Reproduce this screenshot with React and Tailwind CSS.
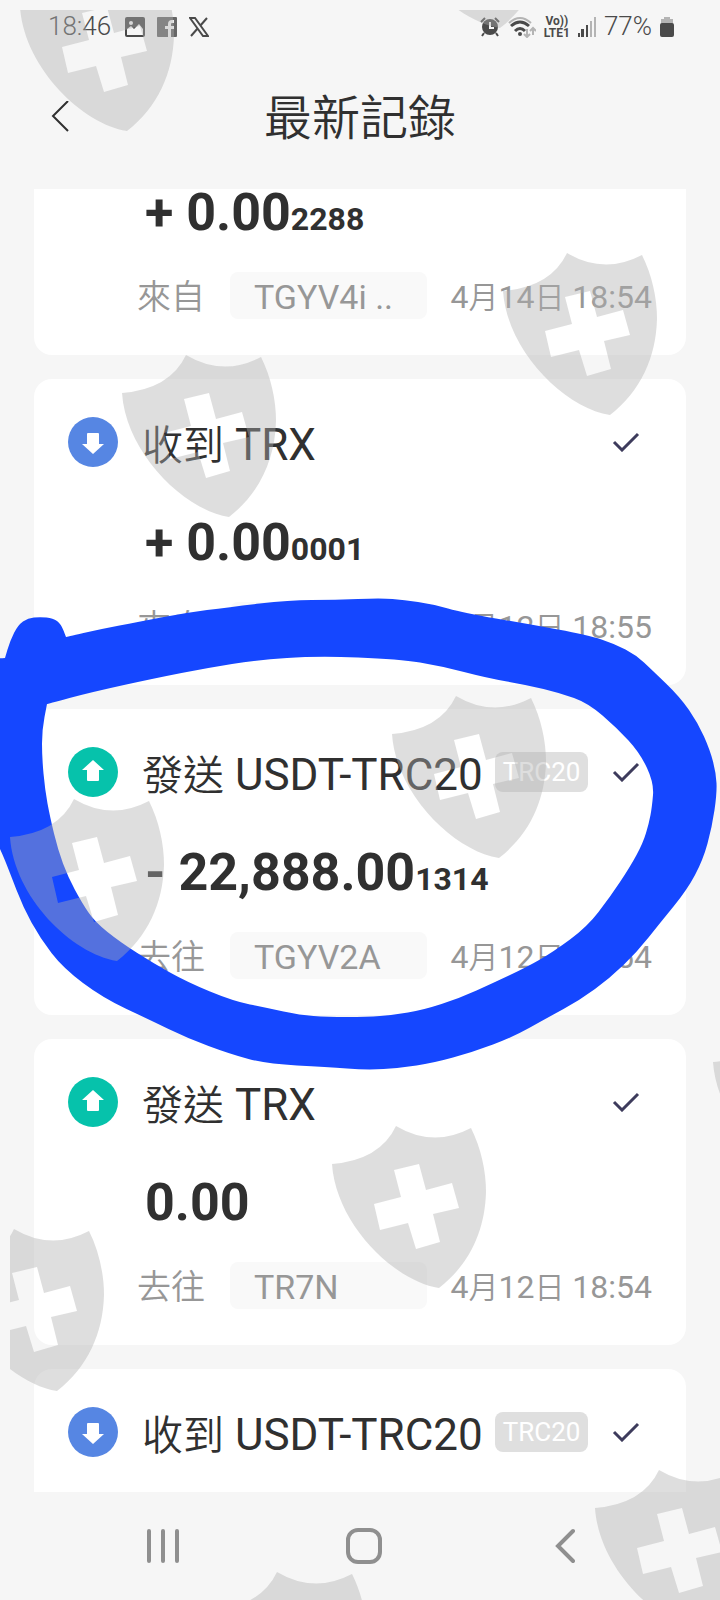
import React from 'react';
import { FaXTwitter } from 'react-icons/fa6';

const records = [
  { id: 1, clipped: true, type: 'in', coin: 'TRX', sign: '+', amount: '0.00', decimals: '2288', address: 'TGYV4i ..', month: 4, day: 14, time: '18:54' },
  { id: 2, type: 'in', coin: 'TRX', sign: '+', amount: '0.00', decimals: '0001', address: '', month: 4, day: 12, time: '18:55' },
  { id: 3, type: 'out', coin: 'USDT-TRC20', tag: 'TRC20', sign: '-', amount: '22,888.00', decimals: '1314', address: 'TGYV2A', month: 4, day: 12, time: '18:54' },
  { id: 4, type: 'out', coin: 'TRX', amount: '0.00', address: 'TR7N', month: 4, day: 12, time: '18:54' },
];

const shields = [
  [20, -31], [393, -134], [503, 253], [122, 355], [392, 696], [10, 799],
  [332, 1126], [-50, 1229], [713, 1024], [595, 1470], [213, 1572],
];

// Hand-drawn marker ring: outer edge, then the hole. A repeated point keeps a sharp corner.
const ringOuter = [
  [-10, 659], [5, 658], [5, 658], [10, 641], [18, 625], [28, 618], [40, 617], [53, 618], [61, 624], [66, 637], [66, 637],
  [101, 629], [138, 622], [184, 613], [230, 607], [289, 600], [335, 600], [381, 598], [404, 600], [432, 604], [464, 613],
  [528, 624], [588, 635], [615, 644], [636, 655], [652, 670], [680, 697], [698, 723], [710, 750], [716, 773], [717, 793],
  [712, 827], [703, 860], [687, 890], [660, 923], [637, 952], [610, 978], [580, 1000], [547, 1018], [513, 1037],
  [473, 1052], [433, 1063], [400, 1068], [367, 1070], [327, 1067], [267, 1064], [230, 1054], [187, 1038], [150, 1020],
  [103, 998], [63, 968], [40, 938], [23, 907], [10, 873], [0, 848], [-10, 830],
];
const ringInner = [
  [47, 704], [47, 704], [42, 730], [42, 757], [45, 790], [50, 817], [58, 850], [68, 877], [82, 903], [95, 922],
  [120, 942], [153, 963], [187, 982], [233, 1001], [267, 1008], [300, 1015], [327, 1017], [367, 1017], [393, 1015],
  [423, 1010], [460, 998], [493, 983], [527, 967], [553, 952], [587, 927], [610, 897], [630, 867], [643, 843],
  [649, 823], [652, 807], [654, 783], [640, 753], [617, 728], [588, 703], [560, 693], [527, 685], [487, 678],
  [441, 666], [399, 659], [317, 656], [257, 660], [207, 668], [156, 678], [92, 692],
];

function smooth(points) {
  const mid = (a, b) => `${(a[0] + b[0]) / 2} ${(a[1] + b[1]) / 2}`;
  const last = points[points.length - 1];
  let d = `M${mid(last, points[0])}`;
  points.forEach((p, i) => {
    d += `Q${p[0]} ${p[1]} ${mid(p, points[(i + 1) % points.length])}`;
  });
  return d + 'Z';
}

function StatusBar() {
  return (
    <div className="flex h-[53px] shrink-0 items-center justify-between pr-[46px] pl-12 text-[26px] text-[#4a4a4a]">
      <div className="flex items-center gap-3">
        <span className="font-light">18:46</span>
        <svg className="ml-0.5 size-5" viewBox="0 0 20 20">
          <path d="M2 0H18Q20 0 20 2V18Q20 20 18 20H2Q0 20 0 18V2Q0 0 2 0Z" fill="currentColor" />
          <path d="M2 12L6 9L9 12L14 7L18 12V18H2Z" fill="#f6f6f6" />
          <circle cx="6" cy="6" r="2" fill="#f6f6f6" />
        </svg>
        <svg className="size-5" viewBox="0 0 20 20">
          <rect width="20" height="20" rx="1" fill="#666" />
          <path d="M17 3H15Q11 3 11 7V9H8V12H11V20H14V12H17V9H14V7Q14 6 15 6H17Z" fill="#f6f6f6" />
        </svg>
        <svg className="size-5" viewBox="0 0 20 20" fill="none" stroke="currentColor" strokeWidth="2">
          <path d="M1 1H6L19 19H14ZM18 1L11 9M9 11L2 19" />
        </svg>
      </div>
      <div className="flex items-center gap-2">
        <svg className="size-5" viewBox="0 0 20 20" fill="none" stroke="currentColor">
          <circle cx="10" cy="10" r="8" fill="currentColor" stroke="none" />
          <path d="M1 5L5 1M19 5L15 1M4 16L2 19M16 16L18 19" strokeWidth="2" />
          <path d="M10 5V11H14" stroke="#f6f6f6" strokeWidth="2" />
        </svg>
        <svg className="h-[22px] w-7" viewBox="0 0 28 22" fill="none" stroke="currentColor" strokeWidth="2">
          <path d="M1 7Q12 -3 23 7" stroke="#b4b4b4" />
          <path d="M3 10Q12 2 21 10M7 15Q12 10 17 15" strokeWidth="3" />
          <circle cx="12" cy="18" r="2" fill="currentColor" stroke="none" />
          <path d="M19 13V21M16 18L19 21L22 18M25 19V12M22 15L25 12L28 15" stroke="#b4b4b4" />
        </svg>
        <span className="flex flex-col items-center text-[12px] leading-[12px] font-bold">
          <span>Vo))</span>
          <span>LTE1</span>
        </span>
        <svg className="h-5 w-[18px]" viewBox="0 0 18 20" fill="currentColor">
          <path d="M0 16H2V20H0ZM3 12H6V20H3ZM8 8H10V20H8Z" />
          <path d="M12 4H14V20H12ZM16 0H18V20H16Z" fill="#b4b4b4" />
        </svg>
        <span className="font-light">77%</span>
        <svg className="h-[22px] w-[14px]" viewBox="0 0 14 22">
          <path d="M4 1H10V3H13V8H1V3H4Z" fill="#b4b4b4" />
          <rect y="7" width="14" height="14" rx="2" fill="#4a4a4a" />
        </svg>
      </div>
    </div>
  );
}

function Header() {
  return (
    <header className="grid h-[136px] shrink-0 grid-cols-[72px_1fr_72px] items-center pb-2 text-[#303030]">
      <button type="button" aria-label="返回" className="justify-self-end pr-px">
        <svg className="h-8 w-5" viewBox="0 0 20 32" fill="none" stroke="currentColor" strokeWidth="2">
          <path d="M17 0L2 15L17 30" />
        </svg>
      </button>
      <h1 className="pt-1 text-center text-[48px] leading-[60px] font-[350]">最新記錄</h1>
    </header>
  );
}

function Direction({ type }) {
  return (
    <svg className="size-[50px] shrink-0" viewBox="0 0 50 50">
      <circle cx="25" cy="25" r="25" fill={type === 'in' ? '#5686e3' : '#06c2ab'} />
      {type === 'in' ? (
        <path d="M20 16H30Q31 16 31 17V27H36L25 37L14 27H19V17Q19 16 20 16Z" fill="#fff" />
      ) : (
        <path d="M25 13L36 23H31V33Q31 34 30 34H20Q19 34 19 33V23H14Z" fill="#fff" />
      )}
    </svg>
  );
}

function RecordTitle({ type, coin, tag }) {
  return (
    <div className="flex h-[50px] items-center">
      <Direction type={type} />
      <h2 className="ml-6 pt-1.5 text-[44px] leading-[50px] whitespace-nowrap text-[#303030]">
        <span className="text-[41px] font-[350]">{type === 'in' ? '收到' : '發送'}</span> {coin}
      </h2>
      {tag && (
        <span className="ml-3 rounded-lg bg-[#dfdfdf] px-2 text-[26px] leading-10 text-white">{tag}</span>
      )}
      <svg className="mr-3 ml-auto h-5 w-7 shrink-0" viewBox="0 0 28 20" fill="none">
        <path d="M2 10L10 18L26 2" stroke="#3d3b5c" strokeWidth="3" />
      </svg>
    </div>
  );
}

function RecordBody({ record }) {
  return (
    <>
      <p className="h-12 pl-[77px] text-[52px] leading-12 font-bold whitespace-nowrap text-[#303030]">
        {record.sign && `${record.sign} `}
        {record.amount}
        <span className="text-[32px]">{record.decimals}</span>
      </p>
      <div className="mt-[35px] flex h-[47px] items-center pl-[69px] whitespace-nowrap text-[#979797]">
        <span className="w-[93px] pt-1 text-[34px] leading-[47px] font-[350]">
          {record.type === 'in' ? '來自' : '去往'}
        </span>
        <span className="h-[47px] w-[197px] rounded-lg bg-[#f9f9f9] pt-0.5 pl-6 text-[34px] leading-[47px]">
          {record.address}
        </span>
        <time className="ml-auto pt-1 text-[32px] leading-[47px]">
          {record.month}
          <span className="text-[30px] font-[350]">月</span>
          {record.day}
          <span className="text-[30px] font-[350]">日</span> {record.time}
        </time>
      </div>
    </>
  );
}

function NavBar() {
  return (
    <nav className="grid h-[108px] shrink-0 grid-cols-3 place-items-center pr-[54px] pl-[62px] text-[#8f8f8f]">
      <button type="button" aria-label="最近">
        <svg className="h-9 w-9" viewBox="0 0 36 36" stroke="currentColor" strokeWidth="4" strokeLinecap="round">
          <path d="M4 3V33M18 3V33M32 3V33" />
        </svg>
      </button>
      <button type="button" aria-label="主畫面">
        <svg className="h-9 w-9" viewBox="0 0 36 36" fill="none" stroke="currentColor" strokeWidth="4">
          <rect x="2" y="2" width="32" height="32" rx="10" />
        </svg>
      </button>
      <button type="button" aria-label="上一頁">
        <svg className="h-9 w-5" viewBox="0 0 20 36" fill="none" stroke="currentColor" strokeWidth="4" strokeLinecap="round">
          <path d="M18 3L3 18L18 33" />
        </svg>
      </button>
    </nav>
  );
}

function Overlay() {
  return (
    <svg className="pointer-events-none absolute top-0 left-0 h-[1600px] w-[720px]" viewBox="0 0 720 1600">
      <defs>
        <clipPath id="sheet">
          <rect x="10" y="10" width="710" height="1590" />
        </clipPath>
        {/* Shield with the cross left open */}
        <path
          id="shield"
          fillRule="evenodd"
          d="M0 38Q48 34 64 0Q101 22 139 2C149 22 154 45 154 66C153 104 138 138 107 162C62 155 4 98 0 38Z
             M62 44L87 38L94 64L120 57L127 82L101 88L108 116L84 123L76 97L48 104L42 78L69 71Z"
        />
      </defs>
      <path d={smooth(ringOuter) + smooth(ringInner)} fill="#1547ff" fillRule="evenodd" />
      <g clipPath="url(#sheet)" fill="#b0b0b0" fillOpacity="0.41">
        {shields.map(([x, y]) => (
          <use key={`${x}-${y}`} href="#shield" x={x} y={y} />
        ))}
      </g>
    </svg>
  );
}

export default function App() {
  return (
    <div className="relative flex min-h-screen flex-col overflow-hidden bg-[#f6f6f6] font-['Roboto','Noto_Sans_CJK_TC',sans-serif]">
      <StatusBar />
      <Header />
      <main className="mx-[34px] flex-1">
        <ul className="flex flex-col gap-6">
          {records.map((record) =>
            record.clipped ? (
              <li key={record.id} className="rounded-b-[18px] bg-white px-[34px] pb-9">
                <RecordBody record={record} />
              </li>
            ) : (
              <li key={record.id} className="rounded-[18px] bg-white px-[34px] pt-[38px] pb-9">
                <RecordTitle type={record.type} coin={record.coin} tag={record.tag} />
                <div className="pt-[52px]">
                  <RecordBody record={record} />
                </div>
              </li>
            )
          )}
          {/* the last record runs under the navigation bar */}
          <li className="rounded-t-[18px] bg-white px-[34px] pt-[38px] pb-[35px]">
            <RecordTitle type="in" coin="USDT-TRC20" tag="TRC20" />
          </li>
        </ul>
      </main>
      <NavBar />
      <Overlay />
    </div>
  );
}
